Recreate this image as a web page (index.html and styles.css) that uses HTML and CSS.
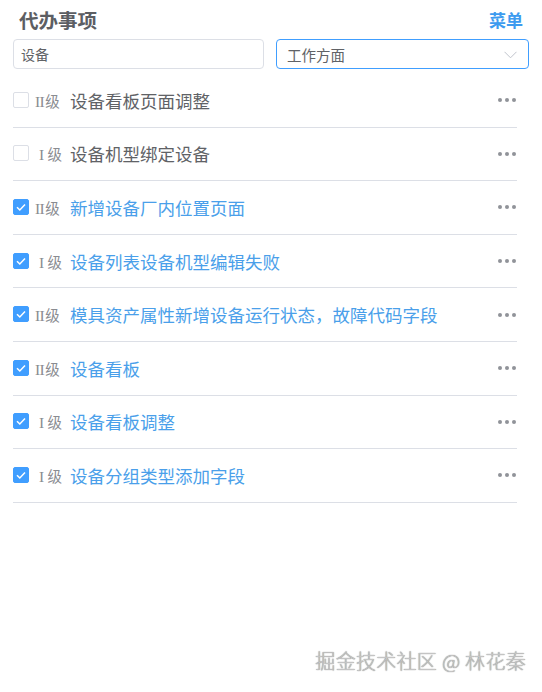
FILE: index.html
```html
<!DOCTYPE html>
<html lang="zh">
<head>
<meta charset="utf-8">
<link rel="stylesheet" href="styles.css">
</head>
<body>
<div class="page">
  <div class="header">
    <h1 class="title">代办事项</h1>
    <a class="menu">菜单</a>
  </div>
  <div class="filters">
    <div class="input">设备</div>
    <div class="select">
      <span>工作方面</span>
      <svg class="chev" width="13" height="8" viewBox="0 0 13 8"><path d="M0.5 0.8 L6.5 6.8 L12.5 0.8" fill="none" stroke="#c0c4cc" stroke-width="1"/></svg>
    </div>
  </div>
  <ul class="list">
    <li class="row"><span class="cb"></span><span class="lvl"><b>II</b>级</span><span class="task">设备看板页面调整</span><span class="more"><i></i><i></i><i></i></span></li>
    <li class="row"><span class="cb"></span><span class="lvl one"><b>I</b>级</span><span class="task">设备机型绑定设备</span><span class="more"><i></i><i></i><i></i></span></li>
    <li class="row done"><span class="cb"><svg width="16" height="16" viewBox="0 0 16 16"><path d="M4 8.2 L6.8 11 L12 5.5" fill="none" stroke="#fff" stroke-width="1.5"/></svg></span><span class="lvl"><b>II</b>级</span><span class="task">新增设备厂内位置页面</span><span class="more"><i></i><i></i><i></i></span></li>
    <li class="row done"><span class="cb"><svg width="16" height="16" viewBox="0 0 16 16"><path d="M4 8.2 L6.8 11 L12 5.5" fill="none" stroke="#fff" stroke-width="1.5"/></svg></span><span class="lvl one"><b>I</b>级</span><span class="task">设备列表设备机型编辑失败</span><span class="more"><i></i><i></i><i></i></span></li>
    <li class="row done"><span class="cb"><svg width="16" height="16" viewBox="0 0 16 16"><path d="M4 8.2 L6.8 11 L12 5.5" fill="none" stroke="#fff" stroke-width="1.5"/></svg></span><span class="lvl"><b>II</b>级</span><span class="task">模具资产属性新增设备运行状态，故障代码字段</span><span class="more"><i></i><i></i><i></i></span></li>
    <li class="row done"><span class="cb"><svg width="16" height="16" viewBox="0 0 16 16"><path d="M4 8.2 L6.8 11 L12 5.5" fill="none" stroke="#fff" stroke-width="1.5"/></svg></span><span class="lvl"><b>II</b>级</span><span class="task">设备看板</span><span class="more"><i></i><i></i><i></i></span></li>
    <li class="row done"><span class="cb"><svg width="16" height="16" viewBox="0 0 16 16"><path d="M4 8.2 L6.8 11 L12 5.5" fill="none" stroke="#fff" stroke-width="1.5"/></svg></span><span class="lvl one"><b>I</b>级</span><span class="task">设备看板调整</span><span class="more"><i></i><i></i><i></i></span></li>
    <li class="row done"><span class="cb"><svg width="16" height="16" viewBox="0 0 16 16"><path d="M4 8.2 L6.8 11 L12 5.5" fill="none" stroke="#fff" stroke-width="1.5"/></svg></span><span class="lvl one"><b>I</b>级</span><span class="task">设备分组类型添加字段</span><span class="more"><i></i><i></i><i></i></span></li>
  </ul>
</div>
<div class="watermark">掘金技术社区 @ 林花秦</div>
</body>
</html>
```
FILE: styles.css
```css
html, body {
  margin: 0;
  padding: 0;
  background: #fff;
}
body {
  font-family: "Noto Sans CJK SC", "Noto Sans", sans-serif;
  width: 542px;
  height: 692px;
  position: relative;
  overflow: hidden;
}
.page {
  padding: 6px 13px 0 13px;
}
.header {
  display: flex;
  justify-content: space-between;
  align-items: center;
  height: 28px;
  padding: 0 6px;
}
.title {
  margin: 0;
  font-size: 19.5px;
  font-weight: 700;
  color: #5c5e63;
  line-height: 28px;
}
.menu {
  font-size: 17px;
  font-weight: 700;
  color: #3d9bef;
  line-height: 28px;
}
.filters {
  display: flex;
  gap: 12px;
  margin-top: 5px;
}
.input, .select {
  flex: none;
  height: 28px;
  box-sizing: content-box;
  border-radius: 4px;
  display: flex;
  align-items: center;
  font-size: 14px;
  color: #606266;
}
.input {
  width: 235px;
  border: 1px solid #dcdfe6;
  padding: 0 7px;
}
.select {
  width: 230px;
  border: 1px solid #409eff;
  padding: 0 11px 0 10px;
  justify-content: space-between;
  font-size: 14.5px;
}
.chev {
  display: block;
  margin-top: 1px;
}
.list {
  list-style: none;
  margin: 5px 0 0 0;
  padding: 0;
  width: 504px;
}
.row {
  display: flex;
  align-items: center;
  height: 52.6px;
  border-bottom: 1px solid #dcdfe6;
}
.cb {
  width: 14px;
  height: 14px;
  border: 1px solid #dcdfe6;
  border-radius: 2px;
  background: #fff;
  flex: none;
  position: relative;
  margin-top: -1px;
}
.cb svg {
  position: absolute;
  left: -1px;
  top: -1px;
}
.done .cb {
  background: #409eff;
  border-color: #409eff;
}
.lvl {
  flex: none;
  margin-left: 6px;
  width: 35px;
  font-size: 14.5px;
  color: #8a8c91;
  display: flex;
  align-items: baseline;
}
.lvl b {
  font-family: "Liberation Serif", "DejaVu Serif", serif;
  font-weight: 400;
  font-size: 15.5px;
  letter-spacing: -0.6px;
  margin-right: 1px;
}
.lvl.one {
  padding-left: 4px;
  width: 31px;
}
.lvl.one b {
  margin-right: 4px;
}
.task {
  flex: 1;
  font-size: 17.5px;
  color: #606266;
  white-space: nowrap;
}
.done .task {
  color: #4a9fea;
}
.more {
  display: flex;
  gap: 3px;
  margin-right: 1px;
}
.more i {
  width: 4px;
  height: 4px;
  border-radius: 50%;
  background: #909399;
}
.watermark {
  position: absolute;
  right: 16px;
  top: 646px;
  font-size: 20px;
  font-weight: 300;
  color: #c4c4c4;
  text-shadow: 0 0 1px #666;
  letter-spacing: 0.3px;
}
```
